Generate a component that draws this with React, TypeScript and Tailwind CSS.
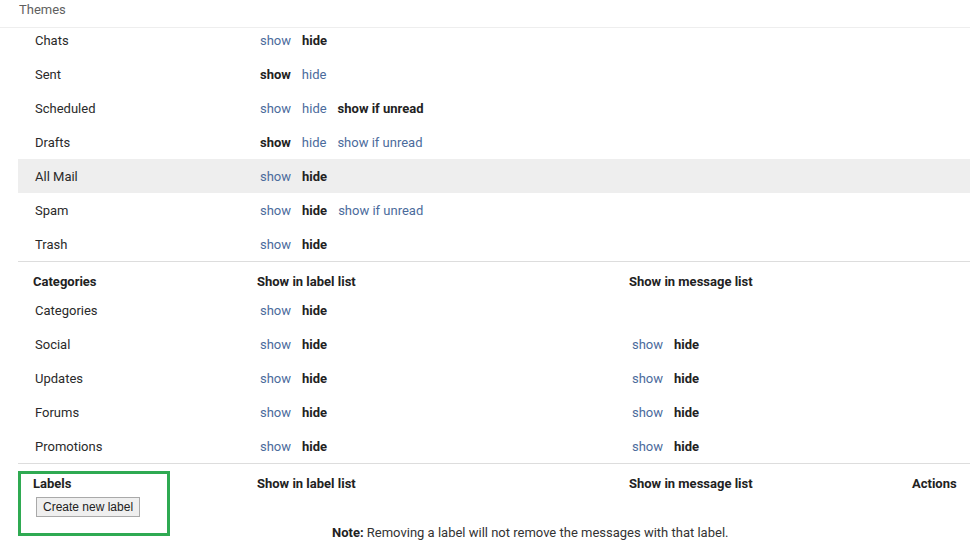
import React from "react";

type Opt = { text: string; active?: boolean };

const systemRows: { name: string; opts: Opt[]; highlight?: boolean }[] = [
  { name: "Chats", opts: [{ text: "show" }, { text: "hide", active: true }] },
  { name: "Sent", opts: [{ text: "show", active: true }, { text: "hide" }] },
  { name: "Scheduled", opts: [{ text: "show" }, { text: "hide" }, { text: "show if unread", active: true }] },
  { name: "Drafts", opts: [{ text: "show", active: true }, { text: "hide" }, { text: "show if unread" }] },
  { name: "All Mail", opts: [{ text: "show" }, { text: "hide", active: true }], highlight: true },
  { name: "Spam", opts: [{ text: "show" }, { text: "hide", active: true }, { text: "show if unread" }] },
  { name: "Trash", opts: [{ text: "show" }, { text: "hide", active: true }] },
];

const categoryRows: { name: string; inMessageList: boolean }[] = [
  { name: "Categories", inMessageList: false },
  { name: "Social", inMessageList: true },
  { name: "Updates", inMessageList: true },
  { name: "Forums", inMessageList: true },
  { name: "Promotions", inMessageList: true },
];

function Options({ opts }: { opts: Opt[] }) {
  return (
    <div className="flex items-center gap-[11px]">
      {opts.map((o) =>
        o.active ? (
          <span key={o.text} className="font-bold text-[#222]">
            {o.text}
          </span>
        ) : (
          <span key={o.text} className="text-[#4b6b9c] cursor-pointer">
            {o.text}
          </span>
        )
      )}
    </div>
  );
}

export default function App() {
  return (
    <div className="relative h-[546px] w-[970px] overflow-hidden bg-white text-[13px] leading-[17px] text-[#2a2a2a] [font-family:Roboto,'Liberation_Sans',sans-serif]">
      {/* Tab header */}
      <div className="h-[28px] border-b border-[#eeeeee] pl-[19px] pt-[1px] text-[#5f5f5f]">Themes</div>

      <div className="-mt-[5px] ml-[18px]">
        {/* System labels */}
        <div className="border-b border-[#dddddd]">
          {systemRows.map((row) => (
            <div
              key={row.name}
              className={`grid h-[34px] grid-cols-[239px_1fr] items-center ${row.highlight ? "bg-[#eeeeee]" : ""}`}
            >
              <div className="pl-[17px]">{row.name}</div>
              <div className="pl-[3px]">
                <Options opts={row.opts} />
              </div>
            </div>
          ))}
        </div>

        {/* Categories */}
        <div className="border-b border-[#dddddd]">
          <div className="grid h-[31px] grid-cols-[239px_372px_1fr] pt-[11px] font-bold text-[#222]">
            <div className="pl-[15px]">Categories</div>
            <div>Show in label list</div>
            <div>Show in message list</div>
          </div>
          {categoryRows.map((row) => (
            <div key={row.name} className="grid h-[34px] grid-cols-[239px_372px_1fr] items-center">
              <div className="pl-[17px]">{row.name}</div>
              <div className="pl-[3px]">
                <Options opts={[{ text: "show" }, { text: "hide", active: true }]} />
              </div>
              <div className="pl-[3px]">
                {row.inMessageList && <Options opts={[{ text: "show" }, { text: "hide", active: true }]} />}
              </div>
            </div>
          ))}
        </div>

        {/* Labels */}
        <div>
          <div className="grid grid-cols-[239px_372px_283px_1fr] pt-[11px] font-bold text-[#222]">
            <div className="pl-[15px]">Labels</div>
            <div>Show in label list</div>
            <div>Show in message list</div>
            <div>Actions</div>
          </div>
          <div className="pl-[18px] pt-[5px]">
            <button className="h-[20px] border border-[#a9a9a9] bg-[#efefef] px-[6px] text-[12px] leading-[16px] text-[#222] [font-family:'Liberation_Sans',Arial,sans-serif]">
              Create new label
            </button>
          </div>
          <div className="pl-[314px] pt-[7px] text-[#333]">
            <span className="font-bold text-[#222]">Note:</span> Removing a label will not remove the messages with that label.
          </div>
        </div>
      </div>

      {/* Annotation highlight */}
      <div className="pointer-events-none absolute left-[18px] top-[471px] h-[65px] w-[152px] border-[3px] border-[#2faa52]" />
    </div>
  );
}
